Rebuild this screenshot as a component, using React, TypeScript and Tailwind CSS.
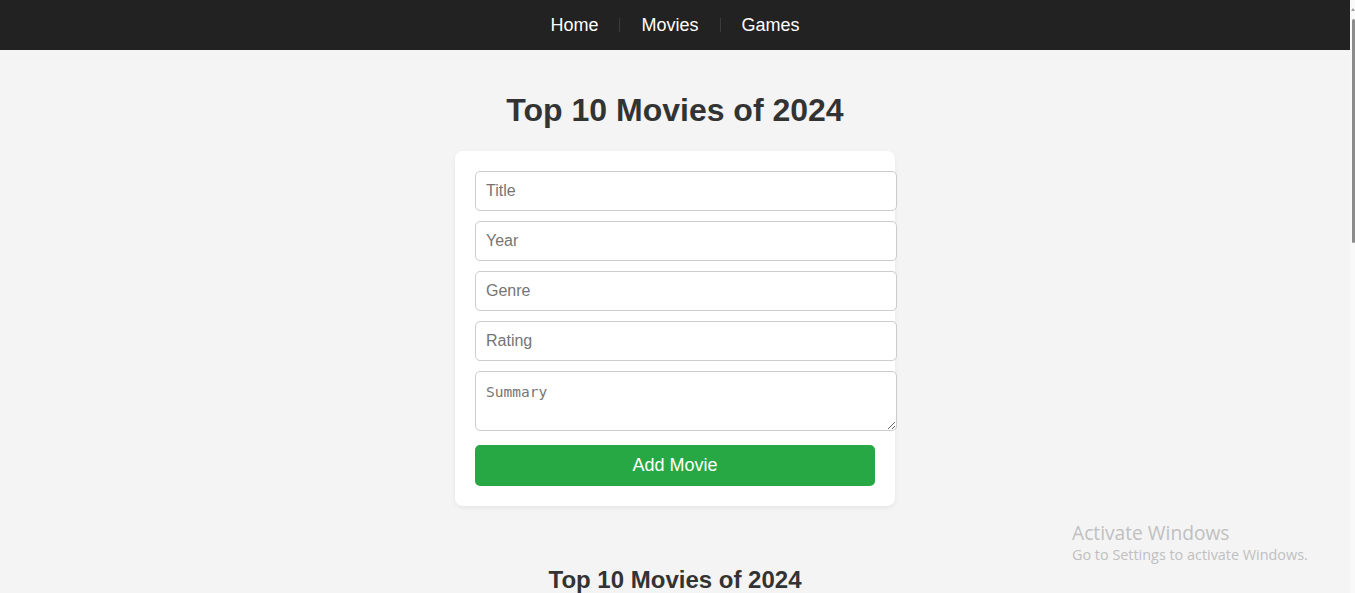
export default function App() {
  const fields = ["Title", "Year", "Genre", "Rating"];

  return (
    <div className="flex h-[593px] w-[1355px] overflow-hidden bg-[#f4f4f4] font-['Liberation_Sans',Arial,sans-serif]">
      <div className="relative w-[1350px] shrink-0">
        <nav className="flex h-[50px] items-center justify-center bg-[#222222] text-[18px] text-white">
          <a href="#" className="leading-[21px]">Home</a>
          <span className="mx-[21px] h-[14px] w-px bg-[#3a3a3a]" />
          <a href="#" className="leading-[21px]">Movies</a>
          <span className="mx-[21px] h-[14px] w-px bg-[#3a3a3a]" />
          <a href="#" className="leading-[21px]">Games</a>
        </nav>

        <main className="flex flex-col items-center pt-[42px]">
          <h1 className="mb-[22px] text-[32px] font-bold leading-[37px] text-[#333333]">
            Top 10 Movies of 2024
          </h1>

          <form className="w-[440px] rounded-[8px] bg-white p-[20px] shadow-[0_2px_5px_rgba(0,0,0,0.06)]">
            <div className="flex flex-col gap-[10px]">
              {fields.map((f) => (
                <input
                  key={f}
                  type="text"
                  placeholder={f}
                  className="box-border h-[40px] w-[422px] rounded-[5px] border border-[#cccccc] bg-white px-[10px] text-[16px] text-[#333333] placeholder:text-[#757575] outline-none"
                />
              ))}
              <textarea
                placeholder="Summary"
                className="box-border block h-[60px] w-[422px] rounded-[5px] border border-[#cccccc] bg-white px-[10px] pt-[12px] font-['DejaVu_Sans_Mono',monospace] text-[14.5px] leading-[17px] text-[#333333] placeholder:text-[#757575] outline-none"
              />
            </div>
            <button
              type="button"
              className="mt-[14px] h-[41px] w-[400px] rounded-[5px] bg-[#28a745] text-[18px] text-white"
            >
              Add Movie
            </button>
          </form>

          <h2 className="mt-[60px] text-[24px] font-bold leading-[28px] text-[#333333]">
            Top 10 Movies of 2024
          </h2>
        </main>

        <div className="absolute left-[1072px] top-[520px] font-['Open_Sans','Noto_Sans',sans-serif] text-[#c0c0c0]">
          <div className="text-[19.2px] leading-[26px]">Activate Windows</div>
          <div className="text-[14.4px] leading-[18px]">Go to Settings to activate Windows.</div>
        </div>
      </div>

      <div className="flex w-[5px] flex-col items-end bg-[#f9f9f9]">
        <div className="mt-[8px] h-0 w-0 border-x-[2px] border-b-[3px] border-x-transparent border-b-[#a0a0a0]" />
        <div className="mt-[8px] h-[224px] w-[3px] rounded-full bg-[#8c8c8c]" />
      </div>
    </div>
  );
}
